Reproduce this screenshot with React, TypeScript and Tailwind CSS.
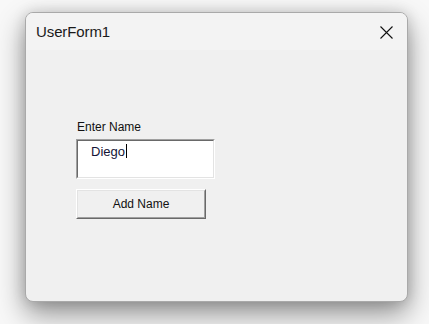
import React from "react";

export default function App() {
  return (
    <div
      className="w-[429px] h-[324px] bg-[#f8f8f8] overflow-hidden pt-[12px] pl-[25px]"
      style={{ fontFamily: '"Liberation Sans", Arial, sans-serif' }}
    >
      <div className="w-[383px] h-[290px] rounded-[8px] border border-[#a9a9a9] bg-[#f0f0f0] overflow-hidden flex flex-col shadow-[0_12px_28px_rgba(0,0,0,0.42),0_0_14px_rgba(0,0,0,0.14)]">
        <div className="h-[37px] shrink-0 bg-[#f3f3f3] flex items-center justify-between pl-[10px] pr-[14px]">
          <span className="text-[15px] text-[#1a1a1a] leading-none tracking-[-0.1px]">UserForm1</span>
          <svg width="13" height="13" viewBox="0 0 13 13" className="mt-[1px]">
            <path d="M0.5 0.5 L12.5 12.5 M12.5 0.5 L0.5 12.5" stroke="#111" strokeWidth="1.1" />
          </svg>
        </div>
        <div className="flex-1 flex flex-col items-start pl-[50px] pt-[70px]">
          <div className="text-[12px] leading-[15px] text-[#111] pl-[1px]">Enter Name</div>
          <div className="mt-[4px] w-[139px] h-[40px] border-t border-l border-[#a0a0a0] border-b border-r border-b-white border-r-white">
            <div className="w-full h-full border-t border-l border-[#696969] border-b border-r border-b-[#e3e3e3] border-r-[#e3e3e3] bg-white pl-[13px] flex items-start">
              <span className="text-[13px] leading-[17px] text-[#141436] mt-[2px]">Diego</span>
              <span className="inline-block w-[1px] h-[14px] bg-black mt-[3px] ml-[1px]" />
            </div>
          </div>
          <button className="mt-[10px] w-[130px] h-[30px] border-t border-l border-white border-b border-r border-b-[#696969] border-r-[#696969] bg-[#f0f0f0] p-0">
            <div className="w-full h-full border-t border-l border-[#e3e3e3] border-b border-r border-b-[#a0a0a0] border-r-[#a0a0a0] flex items-center justify-center text-[12px] text-[#111] leading-none">
              Add Name
            </div>
          </button>
        </div>
      </div>
    </div>
  );
}
